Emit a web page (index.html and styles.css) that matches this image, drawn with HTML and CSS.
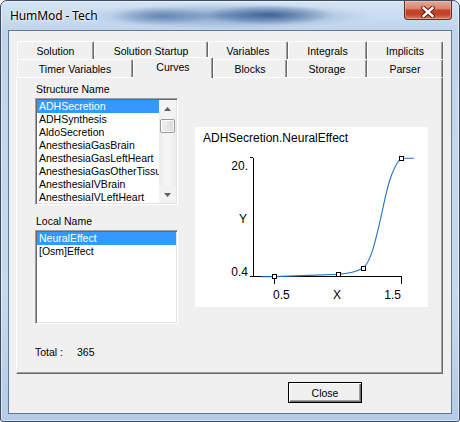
FILE: index.html
```html
<!DOCTYPE html>
<html>
<head>
<meta charset="utf-8">
<title>HumMod - Tech</title>
<link rel="stylesheet" href="styles.css">
</head>
<body>
<div class="window">
  <div class="titlebar">
    <span class="title">HumMod - Tech</span>
    <div class="close-x">
      <svg width="14" height="12" viewBox="0 0 14 12">
        <path class="x-out" d="M2.5 2 L11.5 10 M11.5 2 L2.5 10"/>
        <path class="x-in" d="M2.5 2 L11.5 10 M11.5 2 L2.5 10"/>
      </svg>
    </div>
  </div>
  <div class="client">
    <div class="tabctl">
      <div class="tabrow row-back">
        <div class="tab w-solution">Solution</div>
        <div class="tab w-startup">Solution Startup</div>
        <div class="tab w-variables">Variables</div>
        <div class="tab w-integrals">Integrals</div>
        <div class="tab w-implicits">Implicits</div>
      </div>
      <div class="tabrow row-front">
        <div class="tab w-timer">Timer Variables</div>
        <div class="tab w-curves selected">Curves</div>
        <div class="tab w-blocks">Blocks</div>
        <div class="tab w-storage">Storage</div>
        <div class="tab w-parser">Parser</div>
      </div>
      <div class="panel">
        <div class="panel-main">
          <div class="left-col">
            <div class="label">Structure Name</div>
            <div class="listbox lb-struct">
              <div class="items">
                <div class="item sel">ADHSecretion</div>
                <div class="item">ADHSynthesis</div>
                <div class="item">AldoSecretion</div>
                <div class="item">AnesthesiaGasBrain</div>
                <div class="item">AnesthesiaGasLeftHeart</div>
                <div class="item">AnesthesiaGasOtherTissue</div>
                <div class="item">AnesthesiaIVBrain</div>
                <div class="item">AnesthesiaIVLeftHeart</div>
              </div>
              <div class="vscroll">
                <div class="sb-btn">
                  <svg width="7" height="4" viewBox="0 0 7 4"><path d="M0 4 L3.5 0 L7 4 Z"/></svg>
                </div>
                <div class="sb-track"><div class="sb-thumb"></div></div>
                <div class="sb-btn">
                  <svg width="7" height="4" viewBox="0 0 7 4"><path d="M0 0 L7 0 L3.5 4 Z"/></svg>
                </div>
              </div>
            </div>
            <div class="label label-local">Local Name</div>
            <div class="listbox lb-local">
              <div class="items">
                <div class="item sel">NeuralEffect</div>
                <div class="item">[Osm]Effect</div>
              </div>
            </div>
          </div>
          <div class="graph">
            <svg class="plot" width="233" height="180" viewBox="0 0 233 180">
              <text class="pt" x="8" y="15">ADHSecretion.NeuralEffect</text>
              <path class="axis" d="M58.5 30.5 V149.5 M55 30.5 H58 M55 149.5 H207 M79.5 149.5 V157 M206.5 149.5 V157"/>
              <text class="pt" x="53" y="43" text-anchor="end">20.</text>
              <text class="pt" x="48" y="96" text-anchor="middle">Y</text>
              <text class="pt" x="53" y="149" text-anchor="end">0.4</text>
              <text class="pt" x="78" y="172">0.5</text>
              <text class="pt" x="142" y="172" text-anchor="middle">X</text>
              <text class="pt" x="206" y="172" text-anchor="end">1.5</text>
              <path class="curve" d="M66 149.8 L79.5 149.6 C100 149 124 148 143.3 147.2 C153 146.6 161 145 168.3 141 C176 134.5 181 112 186 90 C191 66 196 41 206 31.3 L219 31.3"/>
              <rect class="pt-box" x="77.5" y="147.5" width="4" height="4"/>
              <rect class="pt-box" x="141.5" y="145.5" width="4" height="4"/>
              <rect class="pt-box" x="166.5" y="139.5" width="4" height="4"/>
              <rect class="pt-box" x="204.5" y="29.5" width="4" height="4"/>
            </svg>
          </div>
        </div>
        <div class="total"><span class="total-label">Total :</span><span>365</span></div>
      </div>
    </div>
    <div class="footer"><button class="btn">Close</button></div>
  </div>
</div>
</body>
</html>
```

FILE: styles.css
```css
* { box-sizing: border-box; }
html, body { margin: 0; padding: 0; }
body {
  width: 460px;
  height: 422px;
  overflow: hidden;
  background: #ffffff;
  font-family: "Liberation Sans", Arial, sans-serif;
  font-size: 10.5px;
  color: #000;
}

.window {
  width: 460px;
  height: 422px;
  border: 1px solid #3a4c62;
  border-radius: 7px 7px 3px 3px;
  padding: 0 7px 7px 7px;
  display: flex;
  flex-direction: column;
  box-shadow: inset 0 0 0 1px rgba(255,255,255,0.55);
  background:
    radial-gradient(ellipse 50px 9px at 160px 15px, rgba(60,100,155,0.6), rgba(60,100,155,0)),
    radial-gradient(ellipse 65px 10px at 268px 14px, rgba(40,80,135,0.8), rgba(40,80,135,0)),
    radial-gradient(ellipse 145px 13px at 225px 15px, rgba(80,120,170,0.6), rgba(80,120,170,0)),
    linear-gradient(#d3e3f4, #bfd4eb 30px, #c7d9ed 70%, #b4cbe5);
}

.titlebar {
  height: 29px;
  display: flex;
  align-items: center;
  justify-content: space-between;
  padding-left: 2px;
}
.title {
  font-family: "Noto Sans", "Open Sans", sans-serif;
  font-size: 12px;
  color: #000;
  text-shadow: 0 0 6px rgba(255,255,255,0.9), 0 0 2px rgba(255,255,255,0.9);
  letter-spacing: -0.1px;
}
.close-x {
  align-self: flex-start;
  width: 48px;
  height: 19px;
  border: 1px solid #6a2a20;
  border-top: none;
  border-radius: 0 0 4px 4px;
  background: linear-gradient(#e7a996 0%, #d98670 42%, #c6462d 50%, #c23f27 72%, #dd7a60 100%);
  box-shadow: inset 0 0 0 1px rgba(255,210,200,0.45);
  display: flex;
  align-items: center;
  justify-content: center;
  padding-top: 3px;
}
.x-out { stroke: #5b1e16; stroke-width: 4.4; fill: none; stroke-linecap: square; }
.x-in { stroke: #ffffff; stroke-width: 2.4; fill: none; stroke-linecap: square; }

.client {
  flex: 1;
  background: #f0f0f0;
  border: 1px solid #5f7895;
  display: flex;
  flex-direction: column;
}

.tabctl {
  margin: 10px 0 0 7px;
  width: 427px;
}
.tabrow {
  display: flex;
  padding-left: 1px;
}
.row-back { height: 18px; }
.row-front { height: 18px; align-items: flex-end; }

.tab {
  height: 100%;
  display: flex;
  align-items: center;
  justify-content: center;
  padding-top: 1px;
  white-space: nowrap;
  background: #f0f0f0;
  border-top: 1px solid #ffffff;
  border-left: 1px solid #ffffff;
  border-right: 1px solid #696969;
  box-shadow: inset -1px 0 0 #a0a0a0;
  border-radius: 2px 2px 0 0;
}
.tab.selected {
  position: relative;
  z-index: 1;
  height: 21px;
  margin-bottom: -1px;
  padding-top: 0;
  padding-bottom: 3px;
}

.w-solution { width: 77px; }
.w-startup { width: 114px; }
.w-variables { width: 80px; }
.w-integrals { width: 79px; }
.w-implicits { width: 76px; }
.w-timer { width: 116px; }
.w-curves { width: 80px; }
.w-blocks { width: 74px; }
.w-storage { width: 80px; }
.w-parser { width: 76px; }

.panel {
  height: 297px;
  border-top: 1px solid #ffffff;
  border-left: 1px solid #ffffff;
  border-right: 1px solid #696969;
  border-bottom: 1px solid #696969;
  box-shadow: inset -1px -1px 0 #a0a0a0;
  padding: 5px 0 0 18px;
}
.panel-main {
  display: flex;
  gap: 17px;
}
.left-col {
  width: 143px;
  display: flex;
  flex-direction: column;
}
.label {
  height: 13px;
  line-height: 13px;
  margin-bottom: 2px;
  padding-left: 1px;
}
.label-local { margin-top: 10px; }

.listbox {
  background: #ffffff;
  border: 1px solid;
  border-color: #a0a0a0 #ffffff #ffffff #a0a0a0;
  padding: 1px;
  box-shadow: inset 1px 1px 0 #696969, inset -1px -1px 0 #e3e3e3;
  display: flex;
  overflow: hidden;
}
.lb-struct { height: 107px; }
.lb-local { height: 94px; }
.items {
  flex: 1;
  min-width: 0;
  overflow: hidden;
}
.item {
  height: 13px;
  line-height: 13px;
  padding-left: 2px;
  white-space: nowrap;
  overflow: hidden;
}
.item.sel {
  background: #3399ff;
  color: #ffffff;
}

.vscroll {
  width: 17px;
  display: flex;
  flex-direction: column;
  background: #f3f3f3;
}
.sb-btn {
  height: 17px;
  display: flex;
  align-items: center;
  justify-content: center;
}
.sb-btn svg path { fill: #5e5e5e; }
.sb-track {
  flex: 1;
  padding: 2px 1px 0 1px;
  background: linear-gradient(90deg, #ebebeb, #f6f6f6 40%, #f6f6f6 60%, #ebebeb);
}
.sb-thumb {
  height: 14px;
  border: 1px solid #9a9a9a;
  border-radius: 2px;
  background: linear-gradient(90deg, #f2f2f2, #e6e6e6 50%, #d9d9d9);
  box-shadow: inset 0 0 0 1px rgba(255,255,255,0.8);
}

.graph {
  margin-top: 44px;
  width: 233px;
  height: 180px;
  background: #ffffff;
}
.plot { display: block; }
.pt {
  font-family: "Liberation Sans", Arial, sans-serif;
  font-size: 12px;
  fill: #000;
}
.axis {
  stroke: #000;
  stroke-width: 1;
  fill: none;
  shape-rendering: crispEdges;
}
.curve {
  stroke: #2472c4;
  stroke-width: 1.1;
  fill: none;
}
.pt-box {
  fill: #ffffff;
  stroke: #000;
  stroke-width: 1;
  shape-rendering: crispEdges;
}

.total {
  margin-top: 22px;
  height: 13px;
  line-height: 13px;
  display: flex;
}
.total-label { width: 42px; }

.footer {
  padding: 8px 0 0 279px;
}
.btn {
  width: 74px;
  height: 21px;
  padding: 0;
  font-family: "Liberation Sans", Arial, sans-serif;
  font-size: 10.5px;
  color: #000;
  background: #f0f0f0;
  border: 1px solid #000;
  box-shadow: inset 1px 1px 0 #ffffff, inset -1px -1px 0 #696969, inset -2px -2px 0 #a0a0a0;
}
```
